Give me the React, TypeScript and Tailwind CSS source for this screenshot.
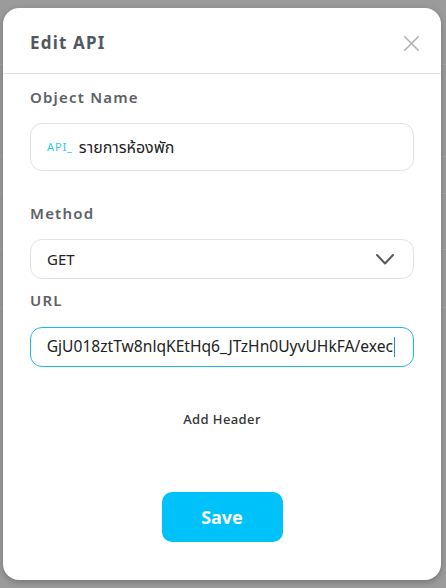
import { X } from "lucide-react";

const font = { fontFamily: '"Noto Sans", "Noto Sans Thai", Lato, sans-serif' };

function Label({ children, className = "" }: { children: React.ReactNode; className?: string }) {
  return (
    <div className={`h-5 text-[15px] leading-5 font-semibold tracking-[0.08em] text-[#5c6168] ${className}`}>
      {children}
    </div>
  );
}

export default function App() {
  const url = "https://script.google.com/macros/s/AKfycbxGjU018ztTw8nlqKEtHq6_JTzHn0UyvUHkFA/exec";

  return (
    <div className="relative h-[588px] w-[446px] overflow-hidden bg-[#9b9b9b]" style={font}>
      {/* faint table lines behind the overlay */}
      <div className="flex flex-col">
        <div className="h-[65px] border-b border-[#a6a6a6]" />
        <div className="h-[92px] border-b border-[#a6a6a6]" />
        <div className="h-[37px] border-b border-[#a6a6a6]" />
        <div className="h-[56px] border-b border-[#a6a6a6]" />
        <div className="h-[58px] border-b border-[#a6a6a6]" />
      </div>

      <div className="absolute left-[3px] top-[8px] flex h-[572px] w-[438px] flex-col rounded-[16px] bg-white shadow-[0_2px_6px_rgba(0,0,0,0.25)]">
        <header className="flex h-[66px] shrink-0 items-center justify-between border-b border-[#e3e3e3] pt-[5px] pl-[27px] pr-[16px]">
          <h1 className="text-[17px] font-bold tracking-[0.07em] text-[#525861]">Edit API</h1>
          <X className="h-[27px] w-[27px] text-[#b4b4b4]" strokeWidth={1.5} />
        </header>

        <div className="flex flex-col px-[27px]">
          <Label className="mt-[13px]">Object Name</Label>
          <div className="mt-4 flex h-[48px] items-center gap-1.5 rounded-[12px] border border-[#e2e2e2] px-4">
            <span className="text-[11px] tracking-[0.08em] text-[#2cc6f4]">API_</span>
            <span className="text-[16px] text-[#222]">รายการห้องพัก</span>
          </div>

          <Label className="mt-[32px]">Method</Label>
          <div className="mt-4 flex h-[40px] items-center justify-between rounded-[12px] border border-[#e2e2e2] pl-4 pr-[19px]">
            <span className="text-[15px] text-[#222]">GET</span>
            <svg width="18" height="11" viewBox="0 0 18 11" fill="none">
              <path d="M1 1l8 8.5L17 1" stroke="#5a5a5a" strokeWidth="2" strokeLinecap="round" strokeLinejoin="round" />
            </svg>
          </div>

          <Label className="mt-[11px]">URL</Label>
          <div className="mt-[17px] flex h-[40px] items-center rounded-[12px] border border-[#1fb8ec] pl-4 pr-[18px]">
            <div className="flex flex-1 items-center justify-end overflow-hidden whitespace-nowrap">
              <span className="text-[15.6px] text-[#222]">{url}</span>
              <span className="ml-px h-[20px] w-px shrink-0 bg-[#1f8fd0]" />
            </div>
          </div>

          <div className="mt-[42px] h-5 text-center text-[13px] leading-5 font-medium tracking-[0.03em] text-[#333]">Add Header</div>

          <div className="mt-[63px] flex justify-center">
            <button className="h-[50px] w-[121px] rounded-[10px] bg-[#00c2fb] text-[18px] font-bold text-white">
              Save
            </button>
          </div>
        </div>
      </div>
    </div>
  );
}
